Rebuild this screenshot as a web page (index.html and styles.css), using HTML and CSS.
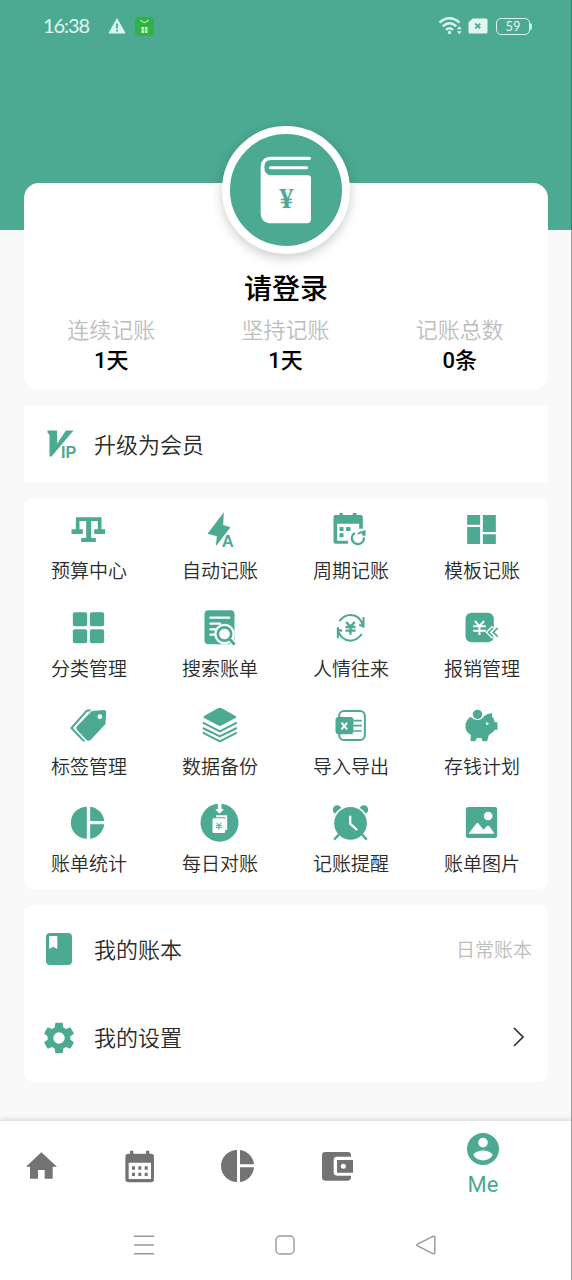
FILE: index.html
```html
<!DOCTYPE html>
<html lang="zh-CN">
<head>
<meta charset="utf-8">
<title>Me</title>
<link rel="stylesheet" href="styles.css">
</head>
<body>
<div class="screen">
  <header class="hero">
    <div class="status">
      <span class="time">16:38</span>
      <svg class="warn" width="18" height="16" viewBox="0 0 18 16"><path d="M9 .8 17 15H1z" fill="#d9f7ee" stroke="#d9f7ee" stroke-linejoin="round"/><path d="M9 5.5v5M9 11.7v1.8" stroke="#4ca992" stroke-width="1.8"/></svg>
      <svg class="app" width="19" height="19" viewBox="0 0 19 19"><rect width="19" height="19" rx="4" fill="#2fb344"/><path d="M5.5 3q4 5 8 0" fill="none" stroke="#d8ffd8" stroke-width="1.1"/><path d="M6.5 10h6v6h-6z" fill="#d8ffd8"/><path d="M9.5 10v6M6.5 13h6" stroke="#2fb344" stroke-width=".8"/></svg>
      <span class="spring"></span>
      <svg width="24" height="20" viewBox="0 0 24 20"><g fill="none" stroke="#d9f7ee" stroke-width="2.4"><path d="M.5 6.500q10-8.500 20 0"/><path d="M3.700 10.300q6.800-6 13.600 0"/><path d="M7 13.800q3.500-3 7 0"/></g><circle cx="10.500" cy="16.500" r="1.700" fill="#d9f7ee"/><path d="m17.800 13.300 2.500-3 2.500 3zM17.800 15.200h5l-2.500 3z" fill="#d9f7ee"/></svg>
      <svg class="sim" width="20" height="16" viewBox="0 0 20 16"><path d="M4.500.5h13.500q1.500 0 1.500 1.500v12q0 1.500-1.500 1.500H2Q.5 15.500.5 14V4.500z" fill="#e2f6ef"/><path d="m7.300 5.600 5 4.800m0-4.800-5 4.800" stroke="#4ca992" stroke-width="1.800"/></svg>
      <div class="battery">59</div><i class="battery-tip"></i>
    </div>
  </header>

  <main class="content">
    <section class="profile">
      <div class="avatar">
        <svg width="112" height="112" viewBox="90 74 336 336">
          <path d="M182 174Q182 142 212 142H329Q333 142 333 147T329 152H213Q193 152 193 174Q193 198 214 198H324Q333 198 333 207V329Q333 342 320 342H214Q182 342 182 308Z" fill="#fff"/>
          <path d="M211 175H320" stroke="#fff" stroke-width="9" stroke-linecap="round"/>
          <text x="259" y="296" class="book-yen">¥</text>
        </svg>
      </div>
      <h1>请登录</h1>
      <div class="stats">
        <div><span>连续记账</span><b>1天</b></div>
        <div><span>坚持记账</span><b>1天</b></div>
        <div><span>记账总数</span><b>0条</b></div>
      </div>
    </section>

    <section class="vip">
      <svg width="32" height="32" viewBox="0 0 32 32"><path d="M.500 2.500h9.500v13L19 2.500h7.500L4.500 28.500H2.500V7L.500 4.500z" fill="#4ca992"/><text x="14" y="29.500" class="vip-text">IP</text></svg>
      <span>升级为会员</span>
    </section>

    <section class="features">
      <div class="feature">
        <svg viewBox="136.500 30 120 120"><path d="M157 52H234V88H245V102H212V88H223V63H203V114H217V126H173V114H188V63H168V88H178V102H144V88H157Z"/></svg>
        <span>预算中心</span></div>
      <div class="feature">
        <svg viewBox="529.500 30 120 120"><path d="M601 37 552 101 580 109 577 139 621 82 599 75Z"/><path class="halo" d="M597 142 611 106H616L630 142"/><text x="613" y="140" class="bolt-a">A</text></svg>
        <span>自动记账</span></div>
      <div class="feature">
        <svg viewBox="136.500 30 120 120"><path d="M148 45H162V39H172V45H202V39H213V45H226Q232 45 232 51V86H221V71H155V122H188V131H150Q144 131 144 125V50Q144 45 148 45ZM162 81H174V93H162ZM182 81H195V93H182ZM162 100H174V112H162Z"/><path class="line" stroke-width="7" d="M208 99A18 18 0 1 0 235 112"/><path d="M215 104 219 97 240 90V107H231L229 100Z"/></svg>
        <span>周期记账</span></div>
      <div class="feature">
        <svg viewBox="529.500 30 120 120"><path d="M545 45H584V74H545ZM592 45H631V96H592ZM545 81H584V132H545ZM592 103H631V132H592Z"/></svg>
        <span>模板记账</span></div>

      <div class="feature">
        <svg viewBox="136.500 323 120 120"><rect x="148" y="336" width="43" height="42" rx="6"/><rect x="199" y="336" width="43" height="42" rx="6"/><rect x="148" y="387" width="43" height="42" rx="6"/><rect x="199" y="387" width="43" height="42" rx="6"/></svg>
        <span>分类管理</span></div>
      <div class="feature">
        <svg viewBox="529.500 323 120 120"><rect x="543" y="330" width="90" height="102" rx="12"/><path class="cut" stroke-width="7" stroke-linecap="round" d="M561 352H617M561 370H590M561 387H580M561 403H575"/><circle class="white" cx="603" cy="401" r="31"/><circle class="line" cx="603" cy="401" r="20" stroke-width="8"/><path stroke="#fff" stroke-width="18" d="m621 419 14 14"/><path class="line" stroke-width="9" stroke-linecap="round" d="m618 416 13 14"/></svg>
        <span>搜索账单</span></div>
      <div class="feature">
        <svg viewBox="136.500 323 120 120"><path class="line" stroke-width="6" d="M162 363Q174 344 196 344Q224 344 233 378M234 350V379L221 373M157 380V414M156 386Q165 420 195 421Q215 420 229 401M157 387 170 392"/><path class="line" stroke-width="7" d="m182 365 13 14 13-14M180 380H210M180 391H210M195 379V403"/></svg>
        <span>人情往来</span></div>
      <div class="feature">
        <svg viewBox="529.500 323 120 120"><rect x="540" y="337" width="85" height="89" rx="18"/><path class="cut" stroke-width="6" d="m568 362 14 15 14-15M563 378H601M563 391H601M582 377V404"/><path stroke="#fff" fill="none" stroke-width="13" d="m624 381-15 15 15 15m14-28-14 13 14 13"/><path class="line" stroke-width="5" d="m622 383-13 13 13 13m15-26-14 13 14 13"/></svg>
        <span>报销管理</span></div>

      <div class="feature">
        <svg viewBox="136.500 28 120 120"><path d="M205 43 242 40Q248 40 248 46L246 82 202 129Q195 135 188 129L161 100Q155 94 161 88Z"/><circle class="white" cx="229" cy="60" r="7"/><path class="line" stroke-width="6" stroke-linejoin="round" d="M201 41 190 42 144 94 182 134"/></svg>
        <span>标签管理</span></div>
      <div class="feature">
        <svg viewBox="529.500 28 120 120"><path d="M583 35Q589 32 595 35L636 58Q641 61 636 64L595 86Q589 89 583 86L542 64Q537 61 542 58Z"/><path class="line" stroke-width="6" stroke-linejoin="round" d="M538 78 589 104 640 78M538 94 589 119 640 94M538 108 589 134 640 108"/></svg>
        <span>数据备份</span></div>
      <div class="feature">
        <svg viewBox="136.500 28 120 120"><rect class="line" x="161" y="43" width="77" height="87" rx="14" stroke-width="6"/><rect x="150" y="61" width="54" height="52" rx="9"/><path class="line" stroke-width="5" d="M204 72H229M204 87H229M204 103H229"/><path class="cut" stroke-width="6" d="m168 78 17 20m0-20-17 20"/></svg>
        <span>导入导出</span></div>
      <div class="feature">
        <svg viewBox="529.500 28 120 120"><path d="M555 60Q566 72 586 68Q594 62 596 58Q606 51 619 50Q621 51 620 60Q627 67 628 77H636V99H629Q622 107 610 115L606 130Q606 134 601 134H594Q590 134 590 129L587 124H574L571 131Q570 134 566 134H559Q555 134 555 129L556 115Q537 103 540 85Q542 69 555 60Z"/><circle cx="576" cy="52" r="18" fill="#fff"/><circle cx="576" cy="53" r="14"/><circle class="white" cx="605" cy="81" r="4"/></svg>
        <span>存钱计划</span></div>

      <div class="feature">
        <svg viewBox="136.500 321 120 120"><path d="M190 332V428A48 48 0 0 1 190 332ZM200 332A48 48 0 0 1 242 375H200ZM200 385H242A48 48 0 0 1 200 428Z"/></svg>
        <span>账单统计</span></div>
      <div class="feature">
        <svg viewBox="529.500 321 120 120"><circle cx="588" cy="380" r="57"/><path class="white" d="M583 320H594V340H602L588 353 575 340H583Z"/><path class="cut" stroke-width="6" d="M578 361H608V402"/><rect class="white" x="567" y="367" width="38" height="44" rx="4"/><path class="line" stroke-width="3" d="m579 380 7 8 7-8M577 388H595M577 394H595M586 388V401"/></svg>
        <span>每日对账</span></div>
      <div class="feature">
        <svg viewBox="136.500 321 120 120"><circle cx="155" cy="341" r="13"/><circle cx="235" cy="341" r="13"/><circle class="white" cx="195" cy="382" r="54"/><path class="line" stroke-width="7" d="m160 416-14 15m84-15 14 15"/><circle cx="195" cy="382" r="49"/><path class="cut" stroke-width="7" d="M194 359V383L215 402"/></svg>
        <span>记账提醒</span></div>
      <div class="feature">
        <svg viewBox="529.500 321 120 120"><rect x="541" y="333" width="94" height="93" rx="7"/><circle class="white" cx="608" cy="360" r="13"/><path class="white" d="M549 413 572 383Q576 379 580 384L594 401 604 391Q608 387 612 391L627 413Z"/></svg>
        <span>账单图片</span></div>
    </section>

    <section class="menu">
      <div class="menu-row">
        <svg viewBox="0 0 36 36"><rect x="5" y="2" width="26" height="32" rx="4" fill="#4ca992"/><path d="M8 5h8.300v13l-4.100-2.300L8 18z" fill="#fff"/></svg>
        <span>我的账本</span><small>日常账本</small>
      </div>
      <div class="menu-row">
        <svg viewBox=".6 .6 22.800 22.800"><path fill="#4ca992" d="M19.140 12.940c.04-.3.06-.61.06-.94 0-.32-.02-.64-.07-.94l2.030-1.580a.49.49 0 0 0 .12-.61l-1.920-3.320a.488.488 0 0 0-.59-.22l-2.390.96c-.5-.38-1.030-.7-1.620-.94l-.36-2.540a.484.484 0 0 0-.48-.41h-3.840c-.24 0-.43.17-.47.41l-.36 2.540c-.59.24-1.130.57-1.620.94l-2.390-.96c-.22-.08-.47 0-.59.22L2.740 8.870c-.12.21-.08.47.12.61l2.030 1.580c-.05.3-.09.63-.09.94s.02.64.07.94l-2.030 1.580a.49.49 0 0 0-.12.61l1.920 3.320c.12.22.37.29.59.22l2.390-.96c.5.38 1.030.7 1.620.94l.36 2.540c.05.24.24.41.48.41h3.840c.24 0 .44-.17.47-.41l.36-2.540c.59-.24 1.130-.56 1.620-.94l2.390.96c.22.08.47 0 .59-.22l1.920-3.320c.12-.22.07-.47-.12-.61zM12 15.600A3.600 3.600 0 1 1 12 8.400a3.600 3.600 0 0 1 0 7.200z"/></svg>
        <span>我的设置</span>
        <svg class="chevron" viewBox="0 0 12 20"><path d="m1 1 9 9-9 9" fill="none" stroke="#333" stroke-width="1.700"/></svg>
      </div>
    </section>
  </main>

  <nav class="tabs">
    <div class="tab"><svg viewBox="69 112 108 108"><path d="M124 125 171 168H158V204H134V178H114V204H90V168H78Z"/></svg></div>
    <div class="tab"><svg viewBox="366 112 108 108"><path fill-rule="evenodd" d="M385 129H390V120H400V129H438V120H448V129H453Q462 129 462 138V206Q462 215 453 215H386Q376 215 376 206V138Q376 129 385 129ZM386 156V205H453V156ZM396 167h9v10h-9ZM415 167h9v10h-9ZM434 167h9v10h-9ZM396 186h9v10h-9ZM415 186h9v10h-9ZM434 186h9v10h-9Z"/></svg></div>
    <div class="tab"><svg viewBox="660 113 108 108"><path d="M711 119V215A48 48 0 0 1 711 119ZM720 119A48 48 0 0 1 762 162H720ZM720 171H762A48 48 0 0 1 720 215Z"/></svg></div>
    <div class="tab"><svg viewBox="99 112 108 108"><path d="M118 124H185Q195 124 195 134V138H153Q143 138 143 148V185Q143 195 153 195H195V200Q195 210 185 210H118Q108 210 108 200V134Q108 124 118 124ZM153 148H201V186H153Z"/><circle cx="172" cy="167" r="7.500" fill="#fff"/></svg></div>
    <div class="tab tab-me"><svg viewBox="2 2 20 20"><path d="M12 2a10 10 0 1 0 0 20 10 10 0 0 0 0-20zm0 3a3 3 0 1 1 0 6 3 3 0 0 1 0-6zm0 14.200a7.200 7.200 0 0 1-6-3.220c.03-1.990 4-3.080 6-3.080s5.970 1.090 6 3.080a7.200 7.200 0 0 1-6 3.220z"/></svg><span>Me</span></div>
  </nav>
  <footer class="system">
    <svg viewBox="0 0 22 22"><path d="M1 2.300h20M1 11h20M1 19.700h20"/></svg>
    <svg viewBox="0 0 22 22"><rect x="2" y="2" width="18" height="18" rx="4"/></svg>
    <svg viewBox="0 0 22 22"><path d="M18.500 2.200 2.500 10q-1.500 1 0 2l16 7.800q1.300.3 1.300-1V3.200q0-1.300-1.300-1z"/></svg>
  </footer>
</div>
</body>
</html>
```
FILE: styles.css
```css
* { box-sizing: border-box; }
body { margin: 0; background: #f9f9f9; font-family: Roboto, "Noto Sans CJK SC", sans-serif; color: #2b2b2b; }
svg { display: block; flex: none; }
.screen { position: relative; display: flex; flex-direction: column; width: 572px; height: 1280px; overflow: hidden; }
.screen::after { content: ""; position: absolute; inset: 0 0 0 auto; width: 1px; background: rgba(70, 70, 70, .5); }

.hero { flex: none; height: 230px; background: #4ca992; }
.status { display: flex; align-items: center; height: 52px; padding: 0 40px 0 43px; color: #e0f7ef; }
.time { font: 400 20px/24px Lato, sans-serif; width: 65px; letter-spacing: -1.1px; padding-bottom: 2px; }
.app { margin-left: 9px; }
.spring { flex: 1; }
.sim { margin: 0 7px 0 6px; transform: translateX(-1px); }
.battery { width: 34px; height: 17px; border: 1.500px solid #d9f7ee; border-radius: 5px; font: 13px/14px Lato, sans-serif; text-align: center; }
.battery-tip { width: 2px; height: 7px; background: #c9eee2; border-radius: 0 2px 2px 0; }

.content { flex: 1; display: flex; flex-direction: column; gap: 16px; padding: 0 24px; margin-top: -47px; }
.profile { height: 207px; border-radius: 15px; background: #fff; display: flex; flex-direction: column; align-items: center; }
.avatar { flex: none; width: 128px; height: 128px; margin-top: -57px; display: grid; place-items: center; border: 8px solid #fff; border-radius: 50%; background: #4ca992; box-shadow: 0 4px 12px rgba(0, 0, 0, .2); }
.book-yen { font: bold 86px "Liberation Serif", serif; text-anchor: middle; fill: #4ca992; }
h1 { margin: 18px 0 0; font-size: 28px; line-height: 36px; font-weight: 500; color: #000; }
.stats { display: grid; grid-template-columns: repeat(3, 1fr); align-self: stretch; margin-top: 8px; padding-right: 1px; }
.stats div { display: flex; flex-direction: column; align-items: center; }
.stats span { font-size: 22px; line-height: 30px; font-weight: 350; color: #bdbdbd; }
.stats b { font-size: 22px; line-height: 30px; font-weight: 500; color: #000; }

.vip { height: 76px; background: #fff; display: flex; align-items: center; gap: 15px; padding-left: 23px; font-size: 22px; font-weight: 350; }
.vip span { padding-bottom: 2px; }
.vip-text { font: bold 16px "Liberation Sans", sans-serif; fill: #4ca992; }

.features { display: grid; grid-template-columns: repeat(4, 1fr); grid-template-rows: repeat(4, 1fr); height: 391px; border-radius: 9px; background: #fff; }
.feature { display: flex; flex-direction: column; align-items: center; padding: 12px 1px 0 0; gap: 7px; }
.feature svg { width: 40px; height: 40px; fill: #4ca992; overflow: visible; }
.feature span { font-size: 19px; line-height: 30px; font-weight: 350; }
.feature .line { fill: none; stroke: #4ca992; }
.feature .cut { fill: none; stroke: #fff; }
.feature .white { fill: #fff; }
.feature .halo { fill: #fff; stroke: #fff; stroke-width: 9px; }
.bolt-a { font: bold 50px "Liberation Sans", sans-serif; text-anchor: middle; }

.menu { height: 177px; border-radius: 9px; background: #fff; }
.menu-row { display: flex; align-items: center; height: 88.500px; padding: 0 16px 0 17px; font-size: 22px; font-weight: 350; }
.menu-row span { padding-bottom: 3px; }
.menu-row svg { width: 36px; height: 36px; margin-right: 17px; }
.menu-row small { margin-left: auto; padding-bottom: 2px; font-size: 19px; color: #bcbcbc; }
.menu-row .chevron { width: 12px; height: 20px; margin: 0 7px 2px auto; }

.tabs { flex: none; display: flex; height: 89px; background: #fff; box-shadow: 0 -1px 6px rgba(0, 0, 0, .16); }
.tab { width: 98.500px; padding-right: 16px; display: flex; flex-direction: column; align-items: center; justify-content: center; }
.tab svg { width: 36px; height: 36px; fill: #737373; }
.tab-me { flex: 1; padding: 2px 0 0; color: #4ca992; font-size: 22px; line-height: 30px; gap: 5px; }
.tab-me svg { width: 32px; height: 32px; fill: #4ca992; }
.system { flex: none; display: flex; justify-content: center; gap: 119px; height: 70px; padding-top: 24px; background: #fff; position: relative; padding-right: 3px; }
.system svg { width: 22px; height: 22px; fill: none; stroke: #999; stroke-width: 1.400px; }
```
